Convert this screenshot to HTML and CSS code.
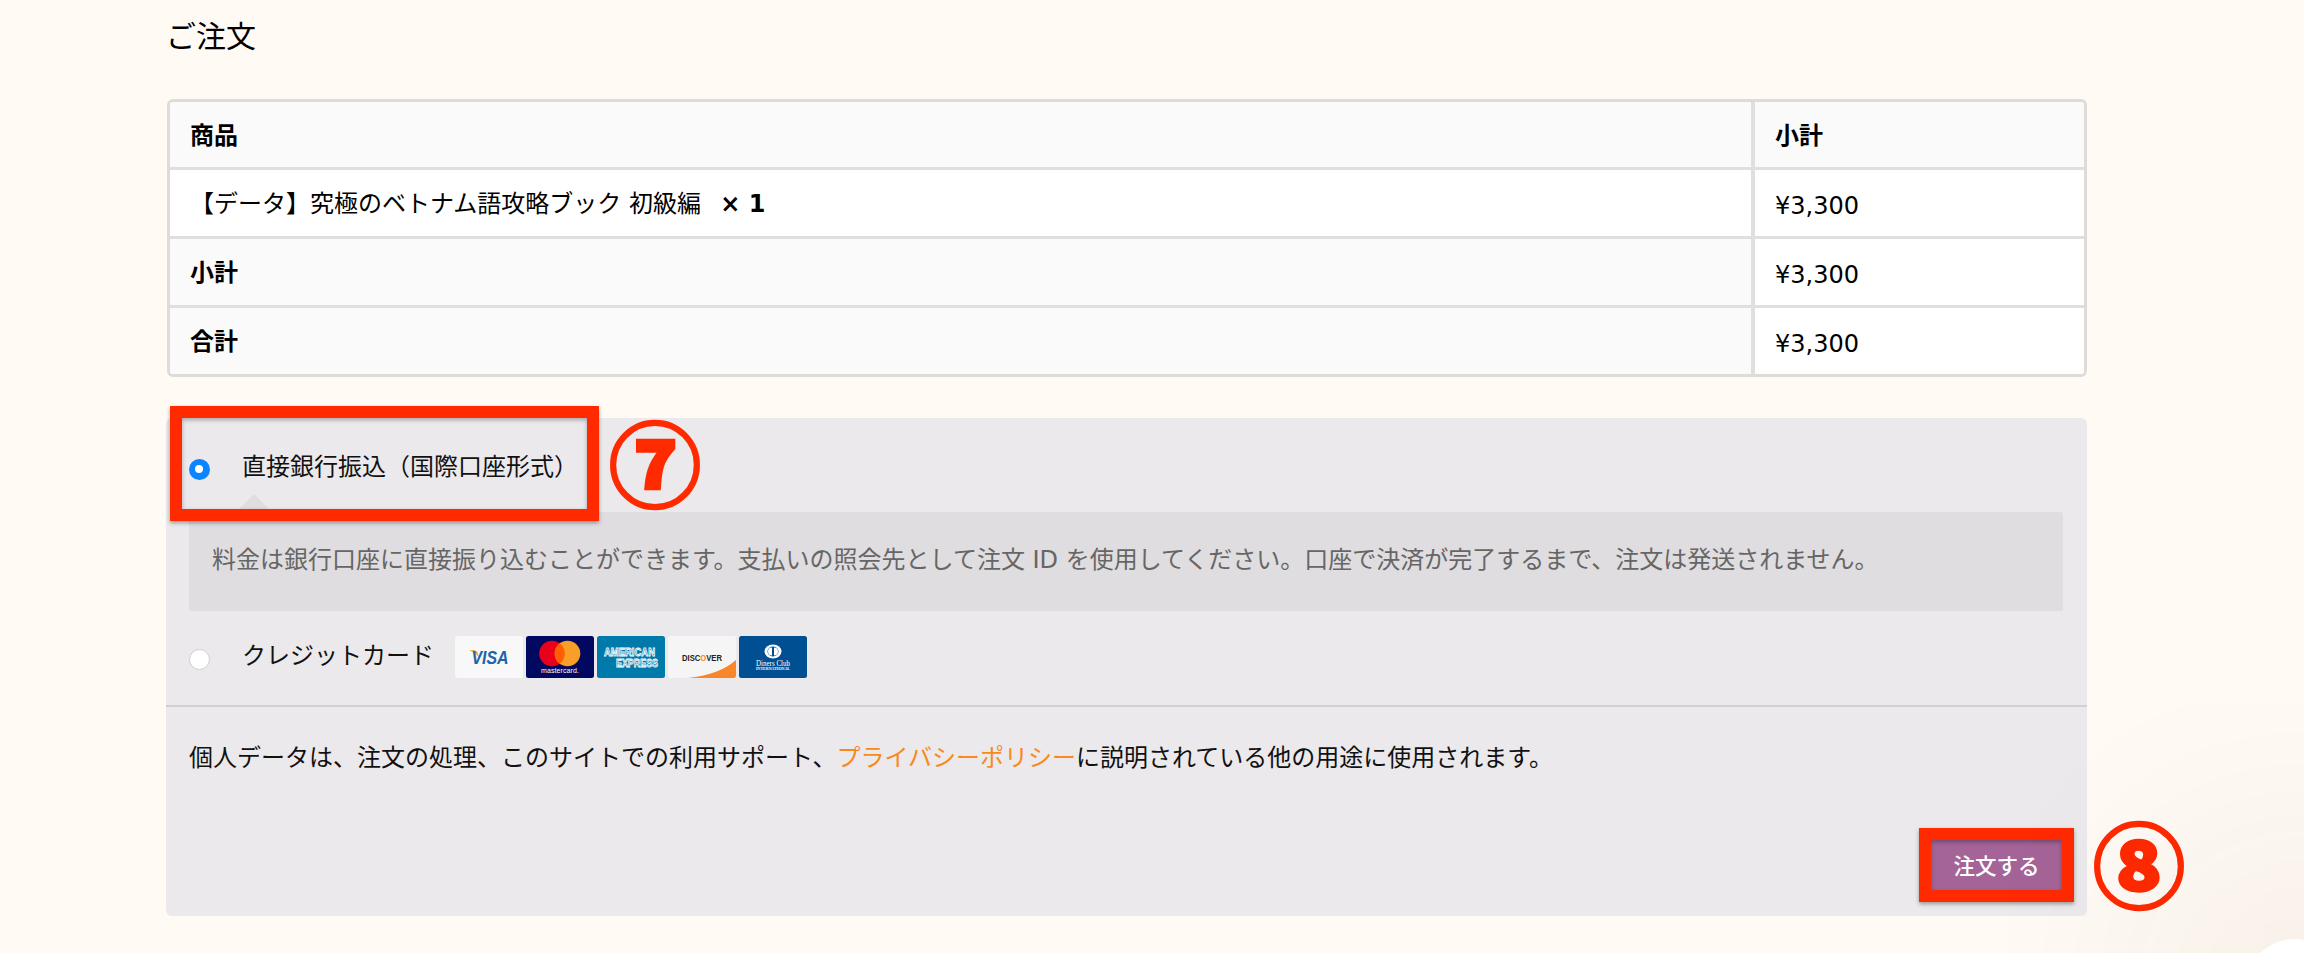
FILE: index.html
```html
<!DOCTYPE html>
<html lang="ja">
<head>
<meta charset="utf-8">
<title>ご注文</title>
<link rel="stylesheet" href="styles.css">
</head>
<body>
<main class="page">
  <h3 class="title">ご注文</h3>
  <div class="table-wrap">
    <table class="order">
      <tr class="head"><th>商品</th><th class="col2">小計</th></tr>
      <tr><td class="item">【データ】究極のベトナム語攻略ブック 初級編&nbsp; <strong class="qty">× 1</strong></td><td class="col2 price">¥3,300</td></tr>
      <tr><th>小計</th><td class="col2 price">¥3,300</td></tr>
      <tr class="last"><th>合計</th><td class="col2 price">¥3,300</td></tr>
    </table>
  </div>
  <section class="payment">
    <div class="methods">
      <div class="method first"><span class="radio on"></span><span class="label">直接銀行振込（国際口座形式）</span></div>
      <div class="desc">料金は銀行口座に直接振り込むことができます。支払いの照会先として注文 ID を使用してください。口座で決済が完了するまで、注文は発送されません。</div>
      <div class="method second">
        <span class="radio"></span><span class="label">クレジットカード</span>
        <div class="cards">
          <svg class="card" viewBox="0 0 68 42"><rect width="68" height="42" rx="2.5" fill="#f8f8f9"/><path d="M14 14.500l5-.5 3.500 2 1.500 6-3.500-5z" fill="#f0a63a"/><text x="35" y="27.500" class="t-visa" textLength="37" lengthAdjust="spacingAndGlyphs">VISA</text></svg>
          <svg class="card" viewBox="0 0 68 42"><rect width="68" height="42" rx="2.5" fill="#00095f"/><circle cx="26" cy="17.500" r="12.800" fill="#eb001b"/><circle cx="41.500" cy="17.500" r="12.800" fill="#f99f27"/><path d="M33.750 7.300a12.800 12.800 0 0 1 0 20.400 12.800 12.800 0 0 1 0-20.400z" fill="#ff5f00"/><text x="34" y="37" class="t-mc" textLength="38">mastercard.</text></svg>
          <svg class="card" viewBox="0 0 68 42"><rect width="68" height="42" rx="2.5" fill="#0079ab"/><text x="7" y="20" class="t-amex" textLength="51" lengthAdjust="spacingAndGlyphs">AMERICAN</text><text x="19" y="31" class="t-amex" textLength="42" lengthAdjust="spacingAndGlyphs">EXPRESS</text></svg>
          <svg class="card" viewBox="0 0 68 42"><rect width="68" height="42" rx="2.500" fill="#f5f5f5"/><path d="M20 42C40 40 57 34 68 24V39.500A2.500 2.500 0 0 1 65.500 42z" fill="#f9862a"/><text x="34" y="24.500" class="t-disc" textLength="40" lengthAdjust="spacingAndGlyphs">DISC<tspan fill="#f9862a">O</tspan>VER</text></svg>
          <svg class="card" viewBox="0 0 68 42"><rect width="68" height="42" rx="2.500" fill="#004f93"/><ellipse cx="34" cy="15.500" rx="8.500" ry="7" fill="#fff"/><ellipse cx="34" cy="15.500" rx="5.500" ry="5" fill="#004f93"/><path d="M33 11.500a4 4 0 0 0 0 8zM35 11.500a4 4 0 0 1 0 8z" fill="#fff"/><text x="34" y="29.500" class="t-din" textLength="34" lengthAdjust="spacingAndGlyphs">Diners Club</text><text x="34" y="33.800" class="t-int" textLength="34" lengthAdjust="spacingAndGlyphs">INTERNATIONAL</text></svg>
        </div>
      </div>
    </div>
    <div class="foot">
      <p class="privacy">個人データは、注文の処理、このサイトでの利用サポート、<a href="#" class="link">プライバシーポリシー</a>に説明されている他の用途に使用されます。</p>
      <div class="actions"><button class="submit" type="button">注文する</button></div>
    </div>
  </section>
  <div class="mark box-seven"></div>
  <div class="mark box-eight"></div>
  <span class="num num-seven">⑦</span>
  <span class="num num-eight">⑧</span>
</main>
<div class="chat"></div>
</body>
</html>
```
FILE: styles.css
```css
* { box-sizing: border-box; }
html, body { margin: 0; height: 100%; }
body {
  background: #fffaf4;
  font-family: "DejaVu Sans", "Noto Sans CJK JP", sans-serif;
  font-size: 24px;
  color: #111;
  overflow: hidden;
}
.page {
  position: relative;
  width: 2087px;
  padding: 17px 0 0 166px;
}
.title {
  margin: 0 0 42px;
  font-size: 30px;
  line-height: 40px;
  font-weight: 400;
  color: #000;
}
.table-wrap {
  width: 1920px;
  margin-left: 1px;
  height: 278px;
  border: 3px solid #dfdcd8;
  border-radius: 6px;
  overflow: hidden;
  background: #fff;
}
.order {
  width: 100%;
  border-collapse: separate;
  border-spacing: 0;
  table-layout: fixed;
}
.order th, .order td {
  text-align: left;
  padding: 2px 20px 0;
  height: 69px;
  border-bottom: 3px solid #dfdfdf;
  line-height: 30px;
  color: #000;
}
.order .head th { height: 68px; }
.order .last th, .order .last td { height: 66px; border-bottom: 0; }
.order th { background: #fafafa; font-weight: 700; }
.order th:first-child, .order td:first-child { border-right: 4px solid #dfdfdf; }
.col2 { width: 329px; }
.order td.col2 { background: #fff; }
.order td.price { padding-top: 5px; }
.qty { font-weight: 700; margin-left: 4px; }
.payment {
  margin-top: 41px;
  width: 1921px;
  height: 498px;
  background: #ebe9eb;
  border-radius: 6px;
}
.methods {
  height: 289px;
  padding: 0 24px 0 23px;
  border-bottom: 2px solid #d3ced2;
}
.method { display: flex; align-items: center; }
.first { height: 94px; padding-top: 6px; }
.radio {
  flex: none;
  width: 21px;
  height: 21px;
  border-radius: 50%;
  background: #fff;
  border: 1px solid #cfcdcf;
}
.first .radio { margin-top: 2px; }
.radio.on { background: #0a84ff; border: 6.500px solid #0a84ff; }
.radio.on::after {
  content: "";
  display: block;
  width: 8px;
  height: 8px;
  border-radius: 50%;
  background: #fff;
}
.label { margin-left: 32px; line-height: 34px; }
.first .label { position: relative; top: -1px; }
.desc {
  position: relative;
  height: 99px;
  padding: 33px 23px 0;
  background: #dfdddf;
  border-radius: 3px;
  color: #666;
  line-height: 30px;
  white-space: nowrap;
}
.desc::before {
  content: "";
  position: absolute;
  left: 47px;
  top: -18px;
  border: 18px solid transparent;
  border-top: 0;
  border-bottom-color: #dfdddf;
}
.second { margin-top: 25px; height: 42px; }
.second .radio { margin-top: 4px; }
.second .label { position: relative; top: -1px; }
.cards { display: flex; gap: 3px; margin-left: 21px; }
.card { display: block; width: 68px; height: 42px; }
.card text { font-family: "Liberation Sans", sans-serif; }
.card .t-visa, .card .t-mc, .card .t-disc, .card .t-din, .card .t-int { text-anchor: middle; }
.t-visa { font-size: 18px; font-weight: 700; font-style: italic; fill: #1a64aa; }
.t-mc { font-size: 7px; fill: #fff; }
.t-amex { font-size: 10.500px; font-weight: 700; fill: #0079ab; stroke: #fff; stroke-width: .8px; }
.t-disc { font-size: 8.500px; font-weight: 700; fill: #222; }
.card .t-din { font-size: 8.500px; fill: #fff; font-family: "Liberation Serif", serif; }
.card .t-int { font-size: 3.600px; fill: #fff; font-family: "Liberation Serif", serif; font-weight: 700; }
.foot { padding: 0 23px; }
.privacy { margin: 36px 0 0; line-height: 30px; }
.link { color: #f7891f; text-decoration: none; }
.actions { display: flex; justify-content: flex-end; margin-top: 65px; padding-right: 1px; }
.submit {
  width: 133px;
  height: 54px;
  border: 0;
  border-radius: 0;
  background: #a46497;
  color: #fff;
  font-family: inherit;
  font-size: 21.500px;
  font-weight: 500;
  padding: 0 0 2px;
}
.mark {
  position: absolute;
  border: 12px solid #ff2a00;
  box-shadow: 0 2px 4px rgba(0,0,0,.35), inset 0 2px 4px rgba(0,0,0,.3);
}
.box-seven { left: 170px; top: 406px; width: 429px; height: 115px; }
.box-eight { left: 1919px; top: 828px; width: 155px; height: 74px; }
.num {
  position: absolute;
  color: #ff2a00;
  font-family: "Noto Sans CJK JP", sans-serif;
  font-weight: 900;
  font-size: 92px;
  line-height: 94px;
  width: 94px;
  text-align: center;
  -webkit-text-stroke: 2.500px #ff2a00;
}
.num-seven { left: 608px; top: 413px; }
.num-eight { left: 2092px; top: 814px; }
.chat {
  position: fixed;
  right: -41px;
  bottom: -86px;
  width: 100px;
  height: 100px;
  border-radius: 50%;
  background: #fff;
  box-shadow: 0 0 280px 70px rgba(70,50,20,.11);
}
```
